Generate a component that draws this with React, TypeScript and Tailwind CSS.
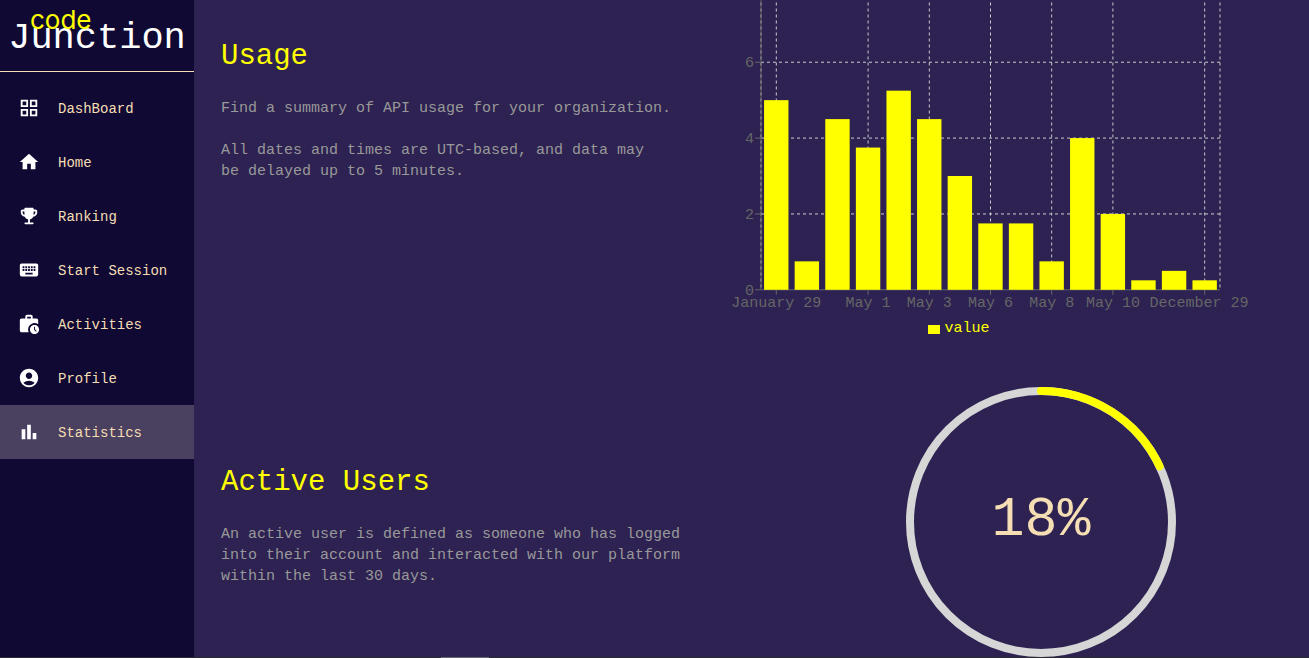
import React from "react";
import {
  MdAccountCircle,
  MdBarChart,
  MdGridView,
  MdHome,
  MdKeyboard,
  MdWorkHistory,
} from "react-icons/md";

function TrophyIcon({ className }: { className?: string }) {
  return (
    <svg viewBox="0 0 24 24" fill="currentColor" className={className} aria-hidden="true">
      <path d="M19 5h-2V4c0-.55-.45-1-1-1H8c-.55 0-1 .45-1 1v1H5c-1.1 0-2 .9-2 2v1c0 2.55 1.92 4.63 4.39 4.94.63 1.5 1.98 2.63 3.61 2.96V19H8c-.55 0-1 .45-1 1s.45 1 1 1h8c.55 0 1-.45 1-1s-.45-1-1-1h-3v-3.1c1.63-.33 2.98-1.46 3.61-2.96C19.08 12.63 21 10.55 21 8V7c0-1.1-.9-2-2-2zM5 8V7h2v3.82C5.84 10.4 5 9.3 5 8zm14 0c0 1.3-.84 2.4-2 2.82V7h2v1z" />
    </svg>
  );
}

const navItems = [
  { label: "DashBoard", Icon: MdGridView },
  { label: "Home", Icon: MdHome },
  { label: "Ranking", Icon: TrophyIcon },
  { label: "Start Session", Icon: MdKeyboard },
  { label: "Activities", Icon: MdWorkHistory },
  { label: "Profile", Icon: MdAccountCircle },
  { label: "Statistics", Icon: MdBarChart, active: true },
];

function Sidebar() {
  return (
    <aside className="flex w-[194px] shrink-0 flex-col bg-[#0f0933]">
      <div className="relative flex h-[72px] justify-center border-b border-[#f5deb3] pt-[18px]">
        <span className="text-[37px] leading-10 text-white">Junction</span>
        <span className="absolute left-[30px] top-1 font-['Inter',sans-serif] text-[26px] leading-8 text-[#ffff00]">
          code
        </span>
      </div>
      <nav className="flex flex-col pt-[9px]">
        {navItems.map(({ label, Icon, active }) => (
          <a
            key={label}
            href="#"
            aria-current={active ? "page" : undefined}
            className={
              active
                ? "flex h-[54px] items-center gap-[18px] bg-[#4a4060] px-[18px]"
                : "flex h-[54px] items-center gap-[18px] px-[18px]"
            }
          >
            <Icon className="size-[22px] shrink-0 text-white" />
            <span className="whitespace-nowrap pt-0.5 text-[14px] leading-5 text-[#f5deb3]">
              {label}
            </span>
          </a>
        ))}
      </nav>
    </aside>
  );
}

const values = [5, 0.75, 4.5, 3.75, 5.25, 4.5, 3, 1.75, 1.75, 0.75, 4, 2, 0.25, 0.5, 0.25];
const xTicks = [
  { index: 0, label: "January 29" },
  { index: 3, label: "May 1" },
  { index: 5, label: "May 3" },
  { index: 7, label: "May 6" },
  { index: 9, label: "May 8" },
  { index: 11, label: "May 10" },
  { index: 14, label: "December 29" },
];
const left = 60;
const right = 519;
const base = 289.8;
const unit = 37.93;
const band = (right - left) / values.length;
const center = (i: number) => left + band * (i + 0.5);

function UsageChart() {
  return (
    <div>
      <svg
        width="560"
        height="318"
        viewBox="0 0 560 318"
        role="img"
        aria-label="API usage by date"
        className="block text-[15px]"
      >
        <g stroke="#ccc" strokeDasharray="3 3">
          {[2, 4, 6].map((v) => (
            <line key={v} x1={left} x2={right} y1={base - v * unit} y2={base - v * unit} />
          ))}
          {xTicks.map(({ index }) => (
            <line key={index} x1={center(index)} x2={center(index)} y1="2.5" y2={base} />
          ))}
          <line x1={left} x2={left} y1="2.5" y2={base} />
          <line x1={right} x2={right} y1="2.5" y2={base} />
        </g>
        <g stroke="#666">
          <line x1={left} x2={left} y1="0" y2={base} />
          <line x1={left} x2={right} y1={base} y2={base} />
          {[0, 2, 4, 6].map((v) => (
            <line key={v} x1={left - 6} x2={left} y1={base - v * unit} y2={base - v * unit} />
          ))}
          {xTicks.map(({ index }) => (
            <line key={index} x1={center(index)} x2={center(index)} y1={base} y2={base + 5} />
          ))}
        </g>
        <g fill="#ffff00">
          {values.map((v, i) => (
            <rect key={i} x={left + band * (i + 0.1)} y={base - v * unit} width="24.4" height={v * unit} />
          ))}
        </g>
        <g fill="#666">
          {[0, 2, 4, 6].map((v) => (
            <text key={v} x={left - 7} y={base - v * unit + 5} textAnchor="end">
              {v}
            </text>
          ))}
          {xTicks.map(({ index, label }) => (
            <text
              key={label}
              x={index === 14 ? 498 : center(index)}
              y={base + 17}
              textAnchor="middle"
            >
              {label}
            </text>
          ))}
        </g>
      </svg>
      <div className="flex w-[516px] items-center justify-center gap-1 pt-px text-[15px] leading-5 text-[#ffff00]">
        <span className="h-[9px] w-3 bg-[#ffff00]" />
        value
      </div>
    </div>
  );
}

function ActiveRing() {
  const length = 2 * Math.PI * 131;
  return (
    <svg width="270" height="270" viewBox="0 0 270 270" role="img" aria-label="18% active users">
      <circle cx="135" cy="135" r="131" fill="none" stroke="#d6d6d6" strokeWidth="8" />
      <circle
        cx="135"
        cy="135"
        r="131"
        fill="none"
        stroke="#ffff00"
        strokeWidth="8"
        strokeLinecap="round"
        strokeDasharray={`${length * 0.18} ${length}`}
        transform="rotate(-90 135 135)"
      />
      <text x="135" y="148" textAnchor="middle" fill="#f5deb3" className="text-[55px]">
        18%
      </text>
    </svg>
  );
}

function Blurb({ title, children }: { title: string; children: React.ReactNode }) {
  return (
    <div className="w-[480px] shrink-0">
      <h2 className="text-[29px] leading-10 text-[#ffff00]">{title}</h2>
      <div className="mt-[21px] flex flex-col gap-[21px] text-[15px] leading-[21px] text-[#999]">
        {children}
      </div>
    </div>
  );
}

export default function App() {
  return (
    <div className="flex min-h-screen flex-col bg-[#2d2252] font-['Liberation_Mono',monospace]">
      <div className="flex flex-1">
        <Sidebar />
        <main className="flex min-w-0 flex-1 flex-col overflow-hidden pl-[27px]">
          <section className="flex h-[387px]">
            <div className="pt-[37px]">
              <Blurb title="Usage">
                <p>Find a summary of API usage for your organization.</p>
                <p>
                  All dates and times are UTC-based, and data may
                  <br />
                  be delayed up to 5 minutes.
                </p>
              </Blurb>
            </div>
            <UsageChart />
          </section>
          <section className="flex items-center">
            <div className="pt-[6px]">
              <Blurb title="Active Users">
                <p>
                  An active user is defined as someone who has logged into their account and
                  interacted with our platform within the last 30 days.
                </p>
              </Blurb>
            </div>
            <div className="flex flex-1 justify-center pl-[72px]">
              <ActiveRing />
            </div>
          </section>
        </main>
      </div>
      <div className="h-px bg-[#2b2a2e] pl-[441px]">
        <div className="h-px w-12 bg-[#6b6b70]" />
      </div>
    </div>
  );
}
